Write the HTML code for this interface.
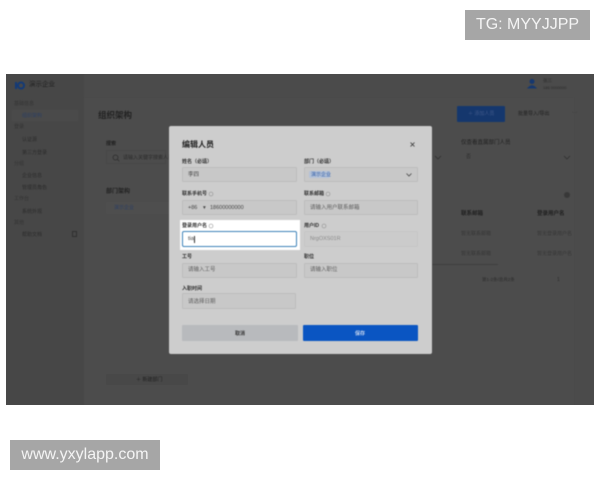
<!DOCTYPE html>
<html lang="zh">
<head>
<meta charset="utf-8">
<style>
html,body{margin:0;padding:0;width:600px;height:480px;overflow:hidden;background:#fff;font-family:"Liberation Sans","Noto Sans CJK SC",sans-serif}
div,span{position:absolute;box-sizing:border-box;white-space:nowrap}
#wm1{left:465px;top:10px;width:125px;height:30px;background:#a6a6a6;color:#f4f4f4;font-size:16px;line-height:30px;text-align:center;filter:blur(.25px)}
#wm2{left:10px;top:440px;width:150px;height:30px;background:#a6a6a6;color:#f4f4f4;font-size:16px;line-height:30px;text-align:center;filter:blur(.25px)}
#shot{left:6px;top:74px;width:588px;height:331px;background:#4b4b4b;overflow:hidden}
#bg{left:0;top:0;width:588px;height:331px;filter:blur(.6px)}
#side{left:0;top:0;width:78px;height:331px;background:#474747}
.t{color:#2a2a2a;line-height:1}
.g{color:#2b2b2b;line-height:1;font-size:5px}
.f{height:15px;border:1px solid #bdbdbd;background:#c8c8c8;border-radius:1px}
#modal{left:169px;top:126px;width:263px;height:228px;background:#cdcdcd;border-radius:2px}
#mwrap{left:0;top:0;width:600px;height:480px;filter:blur(.5px)}
.l{color:#2e2e2e;font-size:5px;line-height:1;font-weight:bold}
.p{color:#5e5e5e;font-size:5.500px;line-height:1}
</style>
</head>
<body>
<div id="wm1">TG: MYYJJPP</div>
<div id="wm2">www.yxylapp.com</div>

<div id="shot">
 <div id="bg">
  <div id="side"></div>
  <svg style="position:absolute;left:8px;top:7px" width="12" height="10"><rect x="1" y="1" width="2" height="7" fill="#123a78"/><circle cx="7" cy="4.500" r="3" fill="none" stroke="#123a78" stroke-width="2"/></svg>
  <span class="t" style="left:23px;top:8px;font-size:6.500px;color:#1f1f1f">演示企业</span>
  <span class="g" style="left:8px;top:28px;color:#333">基础信息</span>
  <div style="left:6px;top:36px;width:66px;height:11px;background:#4a4a4a"></div>
  <span class="g" style="left:16px;top:40px;color:#2c3f63">组织架构</span>
  <span class="g" style="left:8px;top:51px;color:#333">登录</span>
  <span class="g" style="left:16px;top:64px">认证源</span>
  <span class="g" style="left:16px;top:77px">第三方登录</span>
  <span class="g" style="left:8px;top:88px;color:#333">分组</span>
  <span class="g" style="left:16px;top:100px">企业信息</span>
  <span class="g" style="left:16px;top:112px">管理员角色</span>
  <span class="g" style="left:8px;top:123px;color:#333">工作台</span>
  <span class="g" style="left:16px;top:136px">系统外观</span>
  <span class="g" style="left:8px;top:147px;color:#333">其他</span>
  <span class="g" style="left:16px;top:159px">帮助文档</span>
  <div style="left:66px;top:157px;width:5px;height:6px;border:1px solid #2f2f2f"></div>

  <div style="left:78px;top:24px;width:490px;height:307px;background:#4c4c4c"></div>
  <span class="t" style="left:92px;top:37px;font-size:8.500px;font-weight:bold;color:#222">组织架构</span>
  <span class="g" style="left:100px;top:68px;font-weight:bold;color:#1f1f1f">搜索</span>
  <div style="left:100px;top:76px;width:60px;height:14px;border:1px solid #474747"></div>
  <svg style="position:absolute;left:106px;top:80px" width="8" height="8"><circle cx="3.500" cy="3.500" r="2.500" fill="none" stroke="#2c2c2c" stroke-width=".7"/><path d="M5.300 5.300L7.300 7.300" stroke="#2c2c2c" stroke-width=".7"/></svg>
  <span class="g" style="left:117px;top:82px">请输入关键字搜索人员</span>
  <span class="t" style="left:100px;top:115px;font-size:6px;font-weight:bold;color:#222">部门架构</span>
  <div style="left:100px;top:128px;width:64px;height:12px;background:#4e4e4e"></div>
  <span class="g" style="left:108px;top:132px;color:#2c3f63">演示企业</span>
  <div style="left:100px;top:300px;width:82px;height:11px;background:#484848"></div>
  <span class="g" style="left:130px;top:304px;color:#1f1f1f">＋ 新建部门</span>

  <svg style="position:absolute;left:520px;top:4px" width="12" height="12"><circle cx="6" cy="3.500" r="2.500" fill="#16386f"/><path d="M1 10.500Q6 4 11 10.500Z" fill="#16386f"/></svg>
  <span class="g" style="left:537px;top:5px;font-size:4.500px">张三</span>
  <span class="g" style="left:537px;top:12px;font-size:4px">186 0000000</span>
  <div style="left:451px;top:32px;width:48px;height:16px;background:#15376d;border-radius:1px"></div>
  <span class="g" style="left:462px;top:38px;color:#40598a">＋ 添加人员</span>
  <span class="g" style="left:512px;top:38px;color:#1f1f1f">批量导入/导出</span>
  <span class="g" style="left:566px;top:37px;color:#333">···</span>
  <span class="g" style="left:455px;top:67px;color:#1f1f1f;font-size:5.500px">仅查看直属部门人员</span>
  <span class="g" style="left:460px;top:81px">否</span>
  <svg style="position:absolute;left:428px;top:81px" width="8" height="6"><path d="M1 1L4 4L7 1" fill="none" stroke="#2c2c2c" stroke-width=".7"/></svg>
  <svg style="position:absolute;left:557px;top:81px" width="8" height="6"><path d="M1 1L4 4L7 1" fill="none" stroke="#2c2c2c" stroke-width=".7"/></svg>
  <div style="left:558px;top:118px;width:6px;height:6px;background:#383838;border-radius:3px"></div>
  <span class="g" style="left:455px;top:138px;color:#1f1f1f;font-size:5.500px;font-weight:bold">联系邮箱</span>
  <span class="g" style="left:531px;top:138px;color:#1f1f1f;font-size:5.500px;font-weight:bold">登录用户名</span>
  <span class="g" style="left:455px;top:158px;color:#363636">暂无联系邮箱</span>
  <span class="g" style="left:531px;top:158px;color:#363636">暂无登录用户名</span>
  <span class="g" style="left:455px;top:178px;color:#363636">暂无联系邮箱</span>
  <span class="g" style="left:531px;top:178px;color:#363636">暂无登录用户名</span>
  <div style="left:426px;top:190px;width:66px;height:1px;background:#3e3e3e"></div>
  <span class="g" style="left:476px;top:204px;font-size:4.500px">第1-2条/总共2条</span>
  <span class="g" style="left:551px;top:204px">1</span>
 </div>
</div>

<div id="mwrap">
 <div id="modal"></div>
 <span class="t" style="left:182px;top:141px;font-size:8px;font-weight:bold;color:#222">编辑人员</span>
 <svg style="position:absolute;left:409px;top:141px" width="7" height="7"><path d="M1.500 1.500L5.500 5.500M5.500 1.500L1.500 5.500" stroke="#333" stroke-width=".8"/></svg>

 <span class="l" style="left:182px;top:160px">姓名（必填）</span>
 <div class="f" style="left:182px;top:167px;width:115px"></div>
 <span class="p" style="left:188px;top:173px;color:#444">李四</span>

 <span class="l" style="left:304px;top:160px">部门（必填）</span>
 <div class="f" style="left:304px;top:167px;width:114px"></div>
 <div style="left:309px;top:171px;width:21px;height:7px;background:#b4c2d8;border-radius:1px"></div>
 <span class="p" style="left:311px;top:173px;color:#2f5da8;font-size:5px">演示企业</span>
 <svg style="position:absolute;left:405px;top:172px" width="8" height="6"><path d="M1.500 1.500L4 4L6.500 1.500" fill="none" stroke="#444" stroke-width=".8"/></svg>

 <span class="l" style="left:182px;top:192px">联系手机号</span>
 <svg style="position:absolute;left:208px;top:191px" width="6" height="6"><circle cx="3" cy="3" r="2" fill="none" stroke="#888" stroke-width=".5"/></svg>
 <div class="f" style="left:182px;top:200px;width:115px"></div>
 <span class="p" style="left:188px;top:206px;color:#444">+86</span>
 <span class="p" style="left:203px;top:206px;color:#444">▾</span>
 <span class="p" style="left:210px;top:206px;color:#444">18600000000</span>

 <span class="l" style="left:304px;top:192px">联系邮箱</span>
 <svg style="position:absolute;left:325px;top:191px" width="6" height="6"><circle cx="3" cy="3" r="2" fill="none" stroke="#888" stroke-width=".5"/></svg>
 <div class="f" style="left:304px;top:200px;width:114px"></div>
 <span class="p" style="left:310px;top:206px">请输入用户联系邮箱</span>

 <div style="left:180px;top:220px;width:120px;height:30px;background:#fff"></div>
 <span class="l" style="left:182px;top:224px">登录用户名</span>
 <svg style="position:absolute;left:208px;top:223px" width="6" height="6"><circle cx="3" cy="3" r="2" fill="none" stroke="#888" stroke-width=".5"/></svg>
 <div style="left:182px;top:231px;width:115px;height:16px;border:1.500px solid #3d82b8;background:#fff;border-radius:2px"></div>
 <span class="p" style="left:188px;top:237px;color:#444">tia</span>
 <div style="left:194px;top:236px;width:1px;height:7px;background:#333"></div>

 <span class="l" style="left:304px;top:224px">用户ID</span>
 <svg style="position:absolute;left:321px;top:223px" width="6" height="6"><circle cx="3" cy="3" r="2" fill="none" stroke="#888" stroke-width=".5"/></svg>
 <div class="f" style="left:304px;top:231px;width:114px;height:16px;border-color:#c6c6c6;background:#cbcbcb"></div>
 <span class="p" style="left:310px;top:237px;color:#8a8a8a">NrgOXS01R</span>

 <span class="l" style="left:182px;top:255px">工号</span>
 <div class="f" style="left:182px;top:263px;width:115px"></div>
 <span class="p" style="left:188px;top:268px">请输入工号</span>

 <span class="l" style="left:304px;top:255px">职位</span>
 <div class="f" style="left:304px;top:263px;width:114px"></div>
 <span class="p" style="left:310px;top:268px">请输入职位</span>

 <span class="l" style="left:182px;top:287px">入职时间</span>
 <div class="f" style="left:182px;top:293px;width:114px;height:16px"></div>
 <span class="p" style="left:188px;top:300px">请选择日期</span>

 <div style="left:182px;top:325px;width:116px;height:16px;background:#b8babd;border-radius:1px"></div>
 <span class="l" style="left:235px;top:332px;color:#333">取消</span>
 <div style="left:303px;top:325px;width:115px;height:16px;background:#0a55c2;border-radius:1px"></div>
 <span class="l" style="left:355px;top:332px;color:#c6d6ef">保存</span>
</div>
</body>
</html>
